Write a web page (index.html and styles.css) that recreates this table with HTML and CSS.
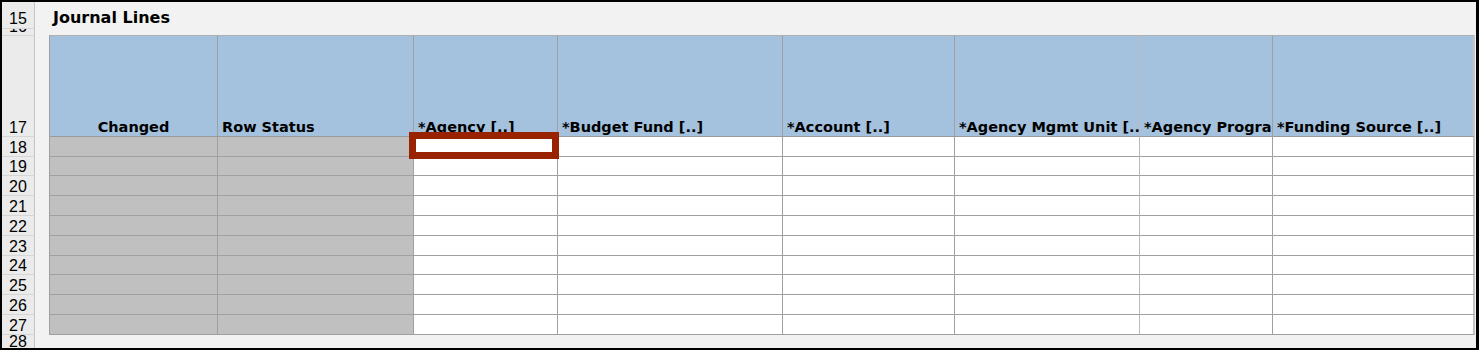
FILE: index.html
```html
<!DOCTYPE html>
<html>
<head>
<meta charset="utf-8">
<link rel="stylesheet" href="styles.css">
</head>
<body>
<div class="sheet">
  <div class="row r15"><div class="rh">15</div><div class="title">Journal Lines</div></div>
  <div class="row r16"><div class="rh rh16"><span>16</span></div></div>
  <div class="row r17">
    <div class="rh rh17">17</div>
    <div class="gap"></div>
    <div class="cells head">
      <div class="c c1 center">Changed</div>
      <div class="c c2">Row Status</div>
      <div class="c c3">*Agency [..]</div>
      <div class="c c4">*Budget Fund [..]</div>
      <div class="c c5">*Account [..]</div>
      <div class="c c6">*Agency Mgmt Unit [..]</div>
      <div class="c c7">*Agency Program [..]</div>
      <div class="c c8">*Funding Source [..]</div>
    </div>
  </div>
  <div class="row d h20"><div class="rh">18</div><div class="gap"></div><div class="cells"><div class="c c1 g"></div><div class="c c2 g"></div><div class="c c3"></div><div class="c c4"></div><div class="c c5"></div><div class="c c6"></div><div class="c c7"></div><div class="c c8"></div></div></div>
  <div class="row d h19"><div class="rh">19</div><div class="gap"></div><div class="cells"><div class="c c1 g"></div><div class="c c2 g"></div><div class="c c3"></div><div class="c c4"></div><div class="c c5"></div><div class="c c6"></div><div class="c c7"></div><div class="c c8"></div></div></div>
  <div class="row d h20"><div class="rh">20</div><div class="gap"></div><div class="cells"><div class="c c1 g"></div><div class="c c2 g"></div><div class="c c3"></div><div class="c c4"></div><div class="c c5"></div><div class="c c6"></div><div class="c c7"></div><div class="c c8"></div></div></div>
  <div class="row d h20"><div class="rh">21</div><div class="gap"></div><div class="cells"><div class="c c1 g"></div><div class="c c2 g"></div><div class="c c3"></div><div class="c c4"></div><div class="c c5"></div><div class="c c6"></div><div class="c c7"></div><div class="c c8"></div></div></div>
  <div class="row d h20"><div class="rh">22</div><div class="gap"></div><div class="cells"><div class="c c1 g"></div><div class="c c2 g"></div><div class="c c3"></div><div class="c c4"></div><div class="c c5"></div><div class="c c6"></div><div class="c c7"></div><div class="c c8"></div></div></div>
  <div class="row d h20"><div class="rh">23</div><div class="gap"></div><div class="cells"><div class="c c1 g"></div><div class="c c2 g"></div><div class="c c3"></div><div class="c c4"></div><div class="c c5"></div><div class="c c6"></div><div class="c c7"></div><div class="c c8"></div></div></div>
  <div class="row d h19"><div class="rh">24</div><div class="gap"></div><div class="cells"><div class="c c1 g"></div><div class="c c2 g"></div><div class="c c3"></div><div class="c c4"></div><div class="c c5"></div><div class="c c6"></div><div class="c c7"></div><div class="c c8"></div></div></div>
  <div class="row d h20"><div class="rh">25</div><div class="gap"></div><div class="cells"><div class="c c1 g"></div><div class="c c2 g"></div><div class="c c3"></div><div class="c c4"></div><div class="c c5"></div><div class="c c6"></div><div class="c c7"></div><div class="c c8"></div></div></div>
  <div class="row d h20"><div class="rh">26</div><div class="gap"></div><div class="cells"><div class="c c1 g"></div><div class="c c2 g"></div><div class="c c3"></div><div class="c c4"></div><div class="c c5"></div><div class="c c6"></div><div class="c c7"></div><div class="c c8"></div></div></div>
  <div class="row d h20"><div class="rh">27</div><div class="gap"></div><div class="cells"><div class="c c1 g"></div><div class="c c2 g"></div><div class="c c3"></div><div class="c c4"></div><div class="c c5"></div><div class="c c6"></div><div class="c c7"></div><div class="c c8"></div></div></div>
  <div class="row r28"><div class="rh rh28">28</div></div>
  <div class="selection"></div>
</div>
</body>
</html>
```

FILE: styles.css
```css
* { box-sizing: border-box; }
html, body { margin: 0; padding: 0; background: #ffffff; }
.sheet {
  position: relative;
  width: 1479px;
  height: 350px;
  border-style: solid;
  border-color: #000;
  border-width: 2px 3px 2px 2px;
  background: #f2f2f2;
  display: flex;
  flex-direction: column;
  overflow: hidden;
}
.row { display: flex; flex: none; }
.rh {
  width: 33px;
  flex: none;
  background: #ebebeb;
  border-right: 1px solid #c4c4c4;
  border-bottom: 1px solid #d6d6d6;
  display: flex;
  align-items: flex-end;
  justify-content: center;
  font-family: "Liberation Sans", Arial, sans-serif;
  font-size: 16px;
  line-height: 16px;
  color: #000;
  padding-bottom: 0;
  overflow: hidden;
}
.r15 { height: 27px; }
.r15 .rh { padding-bottom: 1px; }
.title {
  padding-left: 18px;
  font-family: "DejaVu Sans", Verdana, sans-serif;
  font-weight: bold;
  font-size: 16px;
  line-height: 16px;
  padding-top: 8px;
  color: #000;
}
.r16 { height: 6px; }
.rh16 { border-bottom: none; align-items: flex-start; }
.rh16 span { display: block; margin-top: -10px; }
.r17 { height: 102px; }
.rh17 { border-top: 1px solid #d6d6d6; }
.gap { width: 14px; flex: none; }
.cells { display: flex; }
.c {
  flex: none;
  border-right: 1px solid #a0a0a0;
  border-bottom: 1px solid #a0a0a0;
  background: #fff;
  overflow: hidden;
  white-space: nowrap;
}
.c1 { width: 169px; border-left: 1px solid #a0a0a0; }
.c2 { width: 196px; }
.c3 { width: 144px; }
.c4 { width: 225px; }
.c5 { width: 172px; }
.c6 { width: 185px; border-right-color: #bcbcbc; }
.c7 { width: 133px; }
.c8 { width: 202px; border-right: 2px solid #c4c4c4; }
.g { background: #c0c0c0; }
.head .c {
  background: #a4c2de;
  border-top: 1px solid #b0b0b0;
  border-bottom-color: #9a9a9a;
  display: flex;
  align-items: flex-end;
  padding: 0 0 1px 4px;
  font-family: "DejaVu Sans", Verdana, sans-serif;
  font-weight: bold;
  font-size: 14.5px;
  line-height: 15px;
  color: #000;
}
.head .c.center { justify-content: center; padding-left: 0; }
.h20 { height: 20px; }
.h19 { height: 19px; }
.r28 { height: 13px; }
.rh28 { border-bottom: none; padding-bottom: 0; align-items: flex-start; line-height: 13px; }
.selection {
  position: absolute;
  left: 407px;
  top: 130px;
  width: 150px;
  height: 27px;
  border: 7px solid #992200;
}
```
